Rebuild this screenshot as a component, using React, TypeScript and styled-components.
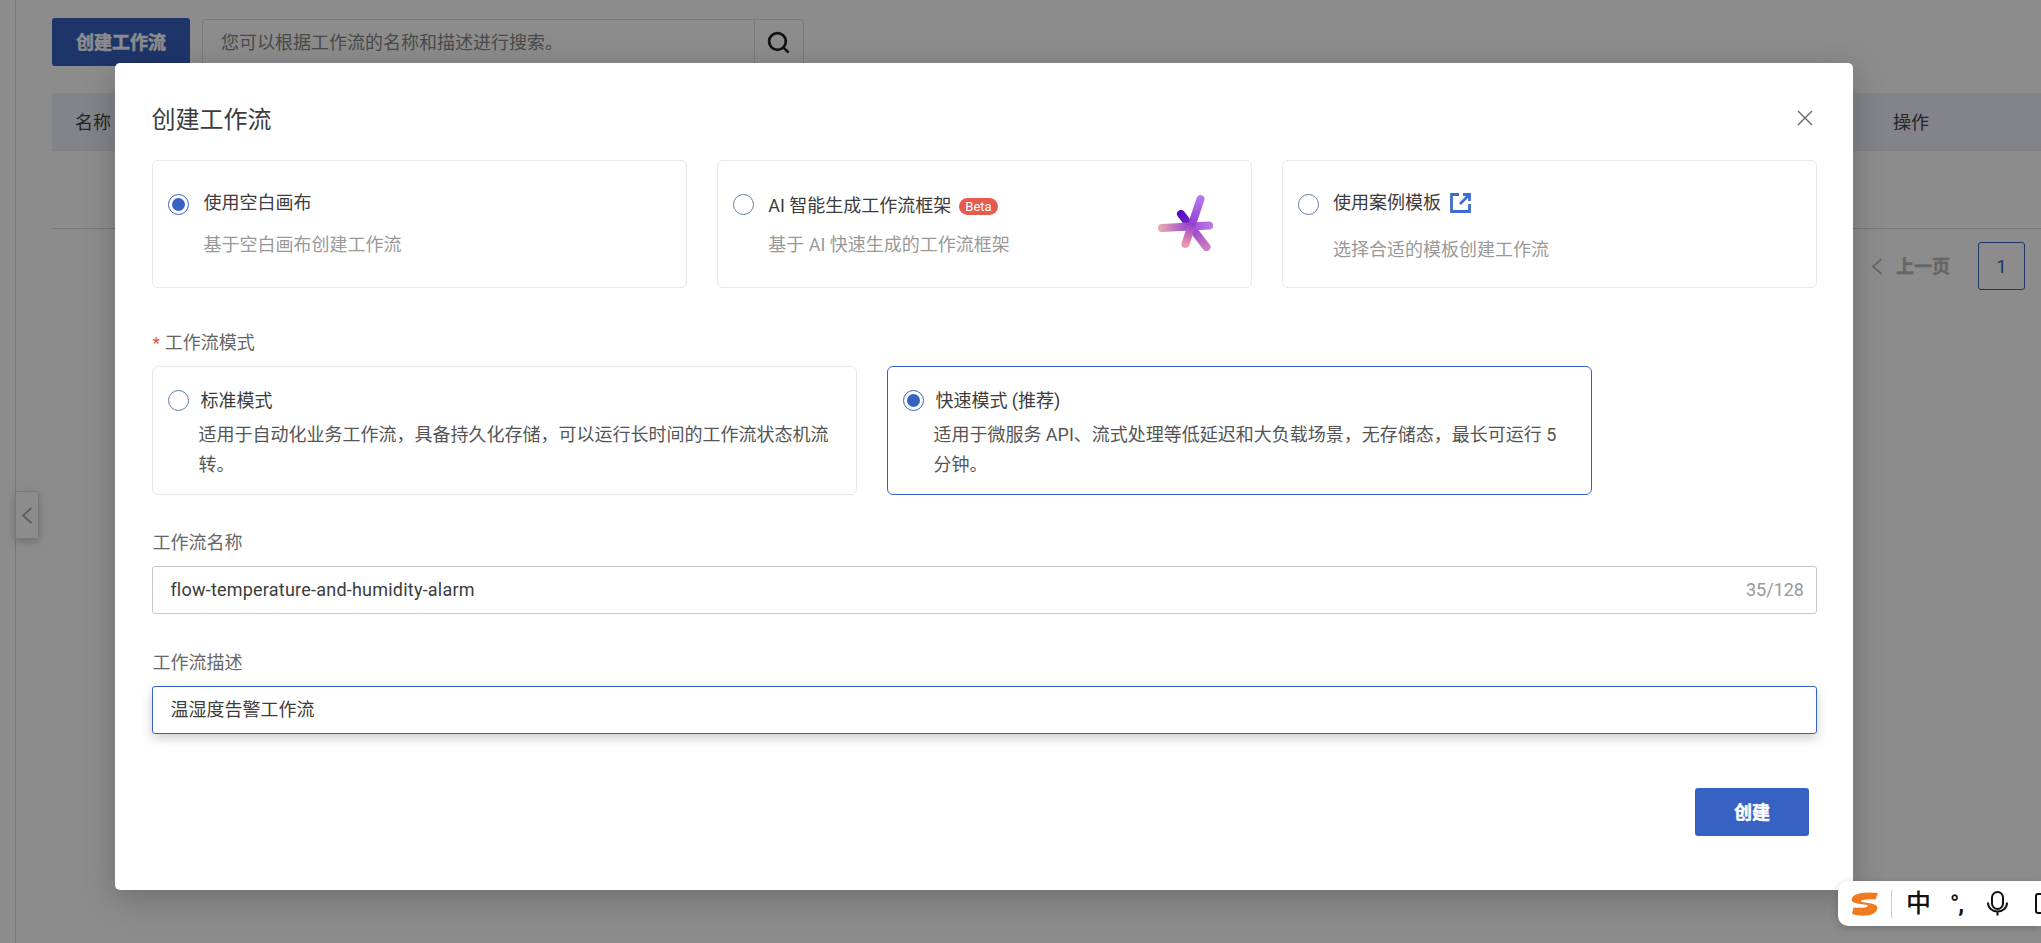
import styled, { createGlobalStyle } from 'styled-components';
import { Search } from 'lucide-react';

const primary = '#3761c2';
const fontStack = '"Roboto", "Noto Sans CJK SC", sans-serif';

const GlobalStyle = createGlobalStyle`
  html, body {
    margin: 0;
    padding: 0;
    background: #fff;
  }
  body {
    font-family: ${fontStack};
    font-size: 18px;
    color: #333;
  }
  * {
    box-sizing: border-box;
  }
`;

const Page = styled.div`
  position: relative;
  display: flex;
  width: 2041px;
  height: 943px;
  overflow: hidden;
  background: #fff;
`;

const SideRail = styled.div`
  position: relative;
  flex: 0 0 16px;
  border-right: 1px solid #d9d9d9;
`;

const CollapseHandle = styled.div`
  position: absolute;
  left: 15px;
  top: 491px;
  display: flex;
  align-items: center;
  justify-content: center;
  width: 24px;
  height: 48px;
  background: #fff;
  border: 1px solid #dcdcdc;
  border-radius: 0 2px 2px 0;
  box-shadow: 0 3px 8px rgba(0, 0, 0, 0.2);
  color: #aaa;
`;

const Main = styled.main`
  flex: 1;
  min-width: 0;
  padding: 18px 0 0 36px;
`;

const Toolbar = styled.div`
  display: flex;
  align-items: flex-start;
  gap: 12px;
`;

const PrimaryButton = styled.button<{ $width: number }>`
  width: ${(p) => p.$width}px;
  height: 48px;
  padding: 0 0 2px;
  border: none;
  border-radius: 3px;
  background: ${primary};
  color: #fff;
  font: 700 18px ${fontStack};
  -webkit-text-stroke: 0.5px #fff;
`;

const SearchBox = styled.div`
  display: flex;
  width: 602px;
  height: 47px;
  margin-top: 1px;
  border: 1px solid #e0e0e0;
  border-radius: 3px;
`;

const SearchInput = styled.input`
  flex: 1;
  min-width: 0;
  padding: 0 18px 1px;
  border: none;
  outline: none;
  background: transparent;
  font: 400 18px ${fontStack};
  &::placeholder {
    color: #888;
    opacity: 1;
  }
`;

const SearchButton = styled.div`
  display: flex;
  align-items: center;
  justify-content: center;
  width: 49px;
  padding-right: 1px;
  border-left: 1px solid #e0e0e0;
  color: #222;
`;

const TableHead = styled.div`
  display: flex;
  align-items: center;
  justify-content: space-between;
  height: 58px;
  margin-top: 27px;
  padding: 0 112px 2px 23px;
  background: #edf0fc;
  border-bottom: 1px solid #e4e6ee;
  color: #444;
`;

const TableEmpty = styled.div`
  height: 78px;
  border-bottom: 1px solid #dcdcdc;
`;

const Pager = styled.div`
  display: flex;
  align-items: center;
  justify-content: flex-end;
  margin-top: 13px;
  padding-right: 16px;
  color: #bbb;
`;

const PagerPrev = styled.span`
  margin: 0 28px 2px 13px;
  font-weight: 700;
  -webkit-text-stroke: 0.5px #bbb;
`;

const PagerCurrent = styled.div`
  display: flex;
  align-items: center;
  justify-content: center;
  width: 47px;
  height: 48px;
  border: 1.3px solid ${primary};
  border-radius: 3px;
  color: ${primary};
`;

const Overlay = styled.div`
  position: absolute;
  inset: 0;
  background: rgba(0, 0, 0, 0.45);
`;

const Dialog = styled.section`
  position: absolute;
  left: 115.4px;
  top: 63px;
  display: flex;
  flex-direction: column;
  width: 1737.6px;
  height: 827px;
  padding: 0 36px 0 37px;
  background: #fff;
  border-radius: 5px;
  box-shadow: 0 8px 32px rgba(0, 0, 0, 0.22);
`;

const DialogHead = styled.header`
  display: flex;
  align-items: center;
  justify-content: space-between;
  padding: 39px 4px 26px 0;
`;

const DialogTitle = styled.h2`
  margin: 2px 0 -2px -1px;
  font-size: 24px;
  font-weight: 400;
  line-height: 32px;
  color: #3c3c3c;
`;

const SourceGrid = styled.div`
  display: grid;
  grid-template-columns: repeat(3, 1fr);
  gap: 30px;
`;

const OptionCard = styled.div`
  display: flex;
  align-items: flex-start;
  height: 128px;
  padding: 28px 15px 0;
  border: 1.3px solid #e5e7eb;
  border-radius: 6px;
`;

const Radio = styled.span<{ $checked?: boolean; $top: number }>`
  flex: 0 0 21px;
  display: flex;
  align-items: center;
  justify-content: center;
  width: 21px;
  height: 21px;
  margin-top: ${(p) => p.$top}px;
  border: 1.3px solid ${(p) => (p.$checked ? primary : '#5f7ba8')};
  border-radius: 50%;
  &::after {
    content: '';
    display: ${(p) => (p.$checked ? 'block' : 'none')};
    width: 13px;
    height: 13px;
    border-radius: 50%;
    background: ${primary};
  }
`;

const CardBody = styled.div<{ $shift: number }>`
  margin: ${(p) => p.$shift}px 0 0 14px;
`;

const CardLabel = styled.div`
  display: flex;
  align-items: center;
  gap: 9px;
  line-height: 30px;
  color: #3c3c3c;
`;

const CardHint = styled.div<{ $gap: number }>`
  margin-top: ${(p) => p.$gap}px;
  line-height: 30px;
  color: #999;
`;

const BetaTag = styled.span`
  display: inline-flex;
  align-items: center;
  height: 17px;
  margin-left: -1px;
  padding: 0 6px;
  border-radius: 9px;
  background: #e55c4f;
  color: #fff;
  font-size: 13px;
  line-height: 17px;
`;

const SparkWrap = styled.div`
  margin: 5px 23px 0 auto;
  line-height: 0;
`;

const FieldLabel = styled.div<{ $top: number }>`
  margin-top: ${(p) => p.$top}px;
  line-height: 30px;
  color: #666;
`;

const Required = styled.span`
  margin-right: 5px;
  font-size: 17px;
  color: #e34d40;
`;

const ModeGrid = styled.div`
  display: grid;
  grid-template-columns: 705px 705px;
  gap: 30px;
  margin-top: 8px;
`;

const ModeCard = styled.div<{ $active?: boolean }>`
  height: 129px;
  padding: 19px 22px 0 15px;
  border: 1.3px solid ${(p) => (p.$active ? primary : '#e5e7eb')};
  border-radius: 6px;
`;

const ModeHead = styled.div`
  display: flex;
  align-items: flex-start;
  gap: 11px;
  line-height: 30px;
  color: #3c3c3c;
`;

const ModeHint = styled.div`
  margin-top: 4px;
  padding-left: 30px;
  line-height: 30px;
  color: #555;
`;

const InputBox = styled.div<{ $focused?: boolean }>`
  display: flex;
  align-items: center;
  height: 48px;
  margin-top: 8px;
  padding: 0 12px 2px 17px;
  border: 1.3px solid ${(p) => (p.$focused ? primary : '#c4c9d1')};
  border-radius: 3px;
  box-shadow: ${(p) => (p.$focused ? '0 4px 12px rgba(0, 0, 0, 0.2)' : 'none')};
`;

const TextInput = styled.input<{ $spacing?: number }>`
  flex: 1;
  min-width: 0;
  padding: 0 0 ${(p) => (p.$spacing ? 0 : 2)}px;
  border: none;
  outline: none;
  background: transparent;
  color: #3c3c3c;
  font: 400 18px ${fontStack};
  letter-spacing: ${(p) => p.$spacing ?? 0}px;
`;

const Counter = styled.span`
  color: #999;
`;

const DialogFoot = styled.div`
  display: flex;
  justify-content: flex-end;
  margin-top: 54px;
  padding-right: 8px;
`;

const ImeBar = styled.div`
  position: absolute;
  left: 1838px;
  top: 881px;
  right: 0;
  display: flex;
  align-items: center;
  height: 45px;
  padding-left: 13px;
  overflow: hidden;
  background: #fff;
  border-radius: 10px 0 0 10px;
  box-shadow: 0 2px 8px rgba(0, 0, 0, 0.2);
  color: #111;
  & > * {
    flex-shrink: 0;
  }
`;

const ImeDivider = styled.span`
  width: 1px;
  height: 28px;
  margin: 0 14px 0 13px;
  background: #ccc;
`;

const ImeGlyph = styled.span`
  width: 25px;
  font-size: 25px;
  line-height: 30px;
  font-weight: 500;
`;

const ImePunct = styled.span`
  width: 22px;
  margin-left: 19px;
  font-size: 24px;
  font-weight: 700;
  line-height: 22px;
  letter-spacing: -1px;
`;

const ImeMic = styled.span`
  display: flex;
  margin-left: 15px;
`;

const ImeBoard = styled.span`
  width: 22px;
  height: 21px;
  margin-left: 27px;
  border: 2px solid #111;
  border-radius: 3px;
`;

const BackChevron = () => (
  <svg width="12" height="17" viewBox="0 0 12 17" fill="none" stroke="currentColor" strokeWidth="1.8">
    <path d="M10.500 1L2 8.500l8.500 7.500" />
  </svg>
);

const CloseIcon = () => (
  <svg width="16" height="16" viewBox="0 0 16 16" fill="none" stroke="#666" strokeWidth="1.4">
    <path d="M1 1l14 14M15 1L1 15" />
  </svg>
);

const ExternalIcon = () => (
  <svg width="21" height="20" viewBox="0 0 21 20" fill="none" stroke="#3f6cd0" strokeWidth="2.8">
    <path d="M9 1.500H1.500v17h18V11" />
    <path d="M13 1.500h6.500V8M19 2l-9 9" />
  </svg>
);

const MicIcon = () => (
  <svg width="21" height="25" viewBox="0 0 21 25" fill="none" stroke="currentColor" strokeWidth="2">
    <rect x="5" y="1" width="11" height="17" rx="5.500" />
    <path d="M1 11.500c0 5.500 4 9 9.500 9s9.500-3.500 9.500-9M10.500 20.500v4" />
  </svg>
);

const SparkIcon = () => (
  <svg width="56" height="57" viewBox="0 0 56 57" fill="none" strokeWidth="8" strokeLinecap="round">
    <defs>
      <linearGradient id="sparkH" gradientUnits="userSpaceOnUse" x1="4" y1="34" x2="53" y2="31">
        <stop offset="0" stopColor="#e6a5b0" />
        <stop offset="0.55" stopColor="#9a45d4" />
        <stop offset="1" stopColor="#b976e4" />
      </linearGradient>
      <linearGradient id="sparkL" gradientUnits="userSpaceOnUse" x1="44" y1="4" x2="28" y2="51">
        <stop offset="0" stopColor="#b478ee" />
        <stop offset="0.55" stopColor="#9340d0" />
        <stop offset="1" stopColor="#f096a8" />
      </linearGradient>
      <linearGradient id="sparkD" gradientUnits="userSpaceOnUse" x1="24" y1="20" x2="50" y2="54">
        <stop offset="0" stopColor="#5a0cc0" />
        <stop offset="0.35" stopColor="#7a2cc8" />
        <stop offset="0.55" stopColor="#a050d0" />
        <stop offset="1" stopColor="#cc7dbd" />
      </linearGradient>
    </defs>
    <path d="M24 20L49.500 53" stroke="url(#sparkD)" />
    <path d="M5 34L52 31.500" stroke="url(#sparkH)" />
    <path d="M43.500 5L28.500 50" stroke="url(#sparkL)" />
  </svg>
);

const SogouLogo = () => (
  <svg width="27" height="24" viewBox="0 0 27 24">
    <path
      fill="#f07a1d"
      d="M27 1C19 0 9 0 4 3 0 5.500-.5 9 3 10.500c4 1.500 9 1.500 13 2.500 1.500.5 1 1.800-1 2.200-4 .8-8 .7-12.500 .3L1 22c7 2 16 2.500 21.500-.5 4.500-2.500 5.500-7 1-9-4-1.600-9-1.600-12.500-2.500-1.500-.5-1.300-1.500.5-2 4-1 9-.8 13-.5z"
    />
  </svg>
);

export default function App() {
  return (
    <Page>
      <GlobalStyle />
      <SideRail>
        <CollapseHandle>
          <BackChevron />
        </CollapseHandle>
      </SideRail>
      <Main>
        <Toolbar>
          <PrimaryButton $width={138}>创建工作流</PrimaryButton>
          <SearchBox>
            <SearchInput readOnly placeholder="您可以根据工作流的名称和描述进行搜索。" />
            <SearchButton>
              <Search size={25} strokeWidth={2.6} />
            </SearchButton>
          </SearchBox>
        </Toolbar>
        <TableHead>
          <span>名称</span>
          <span>操作</span>
        </TableHead>
        <TableEmpty />
        <Pager>
          <BackChevron />
          <PagerPrev>上一页</PagerPrev>
          <PagerCurrent>1</PagerCurrent>
        </Pager>
      </Main>
      <Overlay />
      <Dialog>
        <DialogHead>
          <DialogTitle>创建工作流</DialogTitle>
          <CloseIcon />
        </DialogHead>
        <SourceGrid>
          <OptionCard>
            <Radio $checked $top={5} />
            <CardBody $shift={-1}>
              <CardLabel>使用空白画布</CardLabel>
              <CardHint $gap={12}>基于空白画布创建工作流</CardHint>
            </CardBody>
          </OptionCard>
          <OptionCard>
            <Radio $top={5} />
            <CardBody $shift={2}>
              <CardLabel>
                AI 智能生成工作流框架
                <BetaTag>Beta</BetaTag>
              </CardLabel>
              <CardHint $gap={9}>基于 AI 快速生成的工作流框架</CardHint>
            </CardBody>
            <SparkWrap>
              <SparkIcon />
            </SparkWrap>
          </OptionCard>
          <OptionCard>
            <Radio $top={5} />
            <CardBody $shift={-1}>
              <CardLabel>
                使用案例模板
                <ExternalIcon />
              </CardLabel>
              <CardHint $gap={17}>选择合适的模板创建工作流</CardHint>
            </CardBody>
          </OptionCard>
        </SourceGrid>

        <FieldLabel $top={40}>
          <Required>*</Required>工作流模式
        </FieldLabel>
        <ModeGrid>
          <ModeCard>
            <ModeHead>
              <Radio $top={4} />
              标准模式
            </ModeHead>
            <ModeHint>适用于自动化业务工作流，具备持久化存储，可以运行长时间的工作流状态机流转。</ModeHint>
          </ModeCard>
          <ModeCard $active>
            <ModeHead>
              <Radio $checked $top={4} />
              快速模式 (推荐)
            </ModeHead>
            <ModeHint>适用于微服务 API、流式处理等低延迟和大负载场景，无存储态，最长可运行 5 分钟。</ModeHint>
          </ModeCard>
        </ModeGrid>

        <FieldLabel $top={33}>工作流名称</FieldLabel>
        <InputBox>
          <TextInput readOnly $spacing={0.22} value="flow-temperature-and-humidity-alarm" />
          <Counter>35/128</Counter>
        </InputBox>

        <FieldLabel $top={34}>工作流描述</FieldLabel>
        <InputBox $focused>
          <TextInput readOnly value="温湿度告警工作流" />
        </InputBox>

        <DialogFoot>
          <PrimaryButton $width={114}>创建</PrimaryButton>
        </DialogFoot>
      </Dialog>
      <ImeBar>
        <SogouLogo />
        <ImeDivider />
        <ImeGlyph>中</ImeGlyph>
        <ImePunct>°,</ImePunct>
        <ImeMic>
          <MicIcon />
        </ImeMic>
        <ImeBoard />
      </ImeBar>
    </Page>
  );
}
